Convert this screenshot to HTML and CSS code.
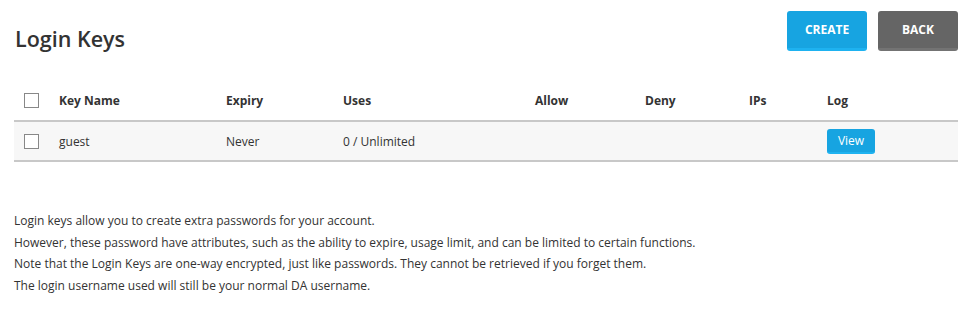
FILE: index.html
```html
<!DOCTYPE html>
<html lang="en">
<head>
    <meta charset="UTF-8">
    <title>Login Keys</title>
    <link rel="stylesheet" href="styles.css">
</head>
<body>
<div id="wrapper">
    <div class="page-head">
        <h2>Login Keys</h2>
        <div class="actions">
            <a class="button button-blue" href="#">CREATE</a>
            <a class="button button-grey" href="#">BACK</a>
        </div>
    </div>
    <table class="keys">
        <thead>
        <tr>
            <th class="col-check"><span class="checkbox"></span></th>
            <th class="col-name">Key Name</th>
            <th class="col-expiry">Expiry</th>
            <th class="col-uses">Uses</th>
            <th class="col-allow">Allow</th>
            <th class="col-deny">Deny</th>
            <th class="col-ips">IPs</th>
            <th class="col-log">Log</th>
        </tr>
        </thead>
        <tbody>
        <tr>
            <td class="col-check"><span class="checkbox"></span></td>
            <td>guest</td>
            <td>Never</td>
            <td>0 / Unlimited</td>
            <td></td>
            <td></td>
            <td></td>
            <td><a class="small-button" href="#">View</a></td>
        </tr>
        </tbody>
    </table>
    <div class="info">
        Login keys allow you to create extra passwords for your account.<br>
        However, these password have attributes, such as the ability to expire, usage limit, and can be limited to certain functions.<br>
        Note that the Login Keys are one-way encrypted, just like passwords. They cannot be retrieved if you forget them.<br>
        The login username used will still be your normal DA username.
    </div>
</div>
</body>
</html>
```

FILE: styles.css
```css
body {
    margin: 0;
    background: #fff;
    font-family: "Open Sans", "Liberation Sans", sans-serif;
    color: #333;
}
#wrapper {
    padding: 11px 7px 0 14px;
}
.page-head {
    display: flex;
    justify-content: space-between;
    align-items: flex-start;
}
h2 {
    margin: 14px 0 0 1px;
    font-size: 21.5px;
    font-weight: 600;
    color: #333;
    line-height: 28px;
}
.actions {
    display: flex;
    gap: 11px;
}
.button {
    display: block;
    width: 80px;
    height: 40px;
    box-sizing: border-box;
    border-radius: 3px;
    color: #fff;
    font-size: 12px;
    font-weight: 700;
    text-align: center;
    line-height: 39px;
    text-decoration: none;
}
.button-blue {
    background: #17a4e1;
    border-bottom: 3px solid #1eb2f0;
    line-height: 38px;
}
.button-grey {
    background: #656565;
    border-bottom: 3px solid #737373;
    line-height: 38px;
}
table.keys {
    width: 944px;
    margin-top: 27px;
    border-collapse: collapse;
    font-size: 12px;
}
.keys th {
    text-align: left;
    font-weight: 700;
    height: 40px;
    padding: 0;
    border-bottom: 2px solid #c8c8c8;
}
.keys td {
    height: 38px;
    padding: 0;
    background: #f7f7f7;
    border-bottom: 2px solid #c8c8c8;
}
.col-check {
    width: 45px;
}
.col-name { width: 167px; }
.col-expiry { width: 117px; }
.col-uses { width: 192px; }
.col-allow { width: 110px; }
.col-deny { width: 104px; }
.col-ips { width: 78px; }
.checkbox {
    display: block;
    width: 13px;
    height: 13px;
    margin-left: 10px;
    border: 1px solid #888;
    background: #fff;
}
.small-button {
    display: inline-block;
    width: 48px;
    height: 25px;
    box-sizing: border-box;
    border-radius: 3px;
    background: #17a4e1;
    border-bottom: 2px solid #1eb2f0;
    color: #fff;
    text-align: center;
    line-height: 23px;
    text-decoration: none;
    font-size: 12px;
}
.info {
    margin-top: 48px;
    font-size: 12px;
    line-height: 21.5px;
    color: #333;
}
```
